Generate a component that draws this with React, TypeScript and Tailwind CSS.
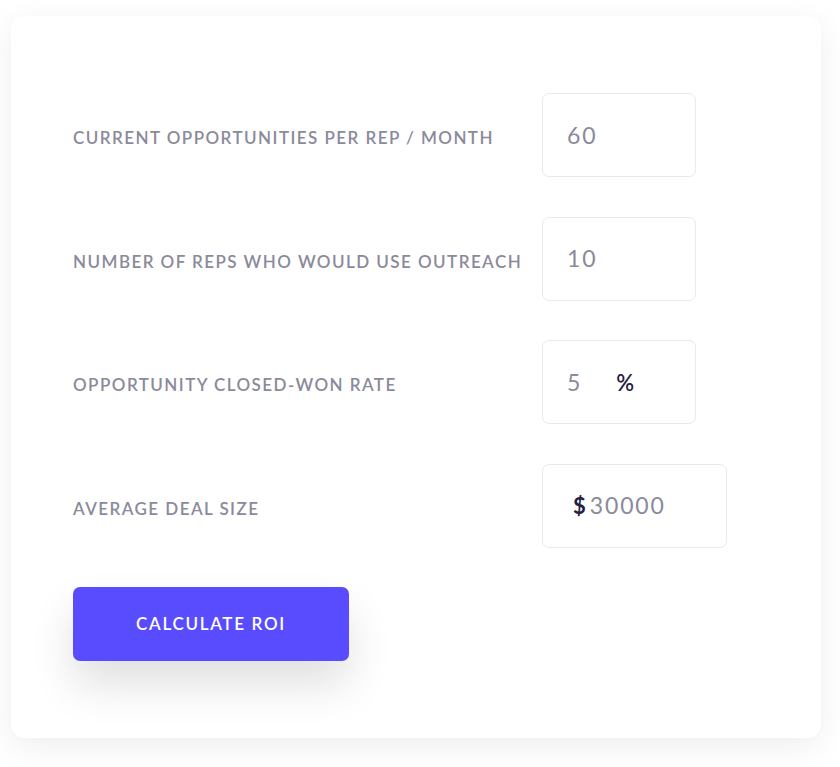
import React from 'react';

type Field = {
  label: string;
  value: string;
  prefix?: string;
  suffix?: string;
  wide?: boolean;
};

const fields: Field[] = [
  { label: 'Current opportunities per rep / month', value: '60' },
  { label: 'Number of reps who would use Outreach', value: '10' },
  { label: 'Opportunity closed-won rate', value: '5', suffix: '%' },
  { label: 'Average deal size', value: '30000', prefix: '$', wide: true },
];

const FieldRow = ({ field }: { field: Field }) => (
  <div className="flex items-center">
    <label className="w-[469px] pt-[6px] text-[17px] font-semibold uppercase tracking-[0.085em] text-[#8b8a9b]">
      {field.label}
    </label>
    <div
      className={`flex h-[84px] items-center rounded-[7px] border border-[#e9e9ee] bg-white ${
        field.wide ? 'w-[185px] pl-[30px]' : 'w-[154px] pl-[24px]'
      }`}
    >
      {field.prefix && (
        <span className="mr-[4px] text-[22px] font-bold text-[#262140]">{field.prefix}</span>
      )}
      <span className="text-[23px] tracking-[0.08em] text-[#8b8a9b]">{field.value}</span>
      {field.suffix && (
        <span className="ml-[34px] text-[22px] font-semibold text-[#262140]">{field.suffix}</span>
      )}
    </div>
  </div>
);

export default function App() {
  return (
    <div
      className="min-h-[767px] bg-white pl-[11px] pr-[19px] pt-[16px] pb-[30px]"
      style={{ fontFamily: 'Lato, "Noto Sans", sans-serif' }}
    >
      <div className="rounded-[14px] bg-white px-[62px] pt-[77px] pb-[77px] shadow-[0_8px_32px_rgba(0,0,0,0.07)]">
        <div className="flex flex-col gap-[39.5px]">
          {fields.map((field) => (
            <FieldRow key={field.label} field={field} />
          ))}
        </div>
        <button className="mt-[39px] flex h-[74px] w-[276px] items-center justify-center rounded-[7px] bg-[#594cff] text-[17px] font-semibold uppercase tracking-[0.1em] text-white shadow-[0_24px_44px_rgba(0,0,0,0.12)]">
          Calculate ROI
        </button>
      </div>
    </div>
  );
}
